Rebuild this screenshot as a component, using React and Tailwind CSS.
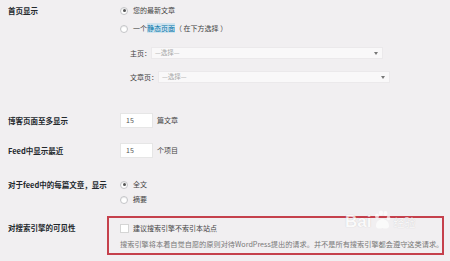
import React from "react";

const font = { fontFamily: '"Noto Sans CJK SC", "Noto Sans", sans-serif' };

function Radio({ checked }) {
  return (
    <span className="w-[8px] h-[8px] rounded-full border border-[#c3c4c7] bg-white flex items-center justify-center shrink-0 shadow-[inset_0_1px_1px_rgba(0,0,0,0.08)]">
      {checked && <span className="w-[3px] h-[3px] rounded-full bg-[#555]" />}
    </span>
  );
}

function Select({ label }) {
  return (
    <div className="flex items-center h-[12px] pl-[10px]">
      <span className="text-[7px] text-[#444] whitespace-nowrap">{label}</span>
      <div className="w-[232px] h-[12px] bg-[#f9f8f9] border border-[#ebe9eb] flex items-center justify-between pl-[3px] pr-[4px]">
        <span className="text-[6.5px] text-[#a8a8a8]">—选择—</span>
        <span className="w-0 h-0 border-l-[2px] border-r-[2px] border-t-[3px] border-l-transparent border-r-transparent border-t-[#777]" />
      </div>
    </div>
  );
}

function Label({ children, h }) {
  return (
    <div className={`w-[120px] pl-[8px] flex items-center shrink-0 text-[7.5px] font-bold text-[#23282d] whitespace-nowrap ${h}`}>
      {children}
    </div>
  );
}

export default function App() {
  return (
    <div className="relative w-[450px] h-[261px] bg-[#f1eff1] overflow-hidden" style={font}>
      <div className="flex flex-col">
        {/* Row 1 */}
        <div className="flex pt-[5px]">
          <Label h="h-[11px]">首页显示</Label>
          <div className="flex flex-col">
            <div className="flex items-center h-[11px] gap-[5px]">
              <Radio checked />
              <span className="text-[7px] text-[#444]">您的最新文章</span>
            </div>
            <div className="flex items-center h-[11px] gap-[5px] mt-[7px]">
              <Radio />
              <span className="text-[7px] text-[#444] whitespace-nowrap">
                一个<span className="text-[#0073aa] bg-[#cfe3ee]">静态页面</span>（ 在下方选择 ）
              </span>
            </div>
            <div className="mt-[13px]">
              <Select label="主页：" />
            </div>
            <div className="mt-[12px]">
              <Select label="文章页：" />
            </div>
          </div>
        </div>

        {/* Row 2 */}
        <div className="flex mt-[30px]">
          <Label h="h-[15px]">博客页面至多显示</Label>
          <div className="flex items-center gap-[4px]">
            <div className="w-[33px] h-[15px] bg-white border border-[#e6e6e6] flex items-center pl-[5px] text-[7px] text-[#555]">15</div>
            <span className="text-[7px] text-[#444]">篇文章</span>
          </div>
        </div>

        {/* Row 3 */}
        <div className="flex mt-[15px]">
          <Label h="h-[15px]">Feed中显示最近</Label>
          <div className="flex items-center gap-[4px]">
            <div className="w-[33px] h-[15px] bg-white border border-[#e6e6e6] flex items-center pl-[5px] text-[7px] text-[#555]">15</div>
            <span className="text-[7px] text-[#444]">个项目</span>
          </div>
        </div>

        {/* Row 4 */}
        <div className="flex mt-[21px]">
          <Label h="h-[11px]">对于feed中的每篇文章，显示</Label>
          <div className="flex flex-col">
            <div className="flex items-center h-[11px] gap-[5px]">
              <Radio checked />
              <span className="text-[7px] text-[#444]">全文</span>
            </div>
            <div className="flex items-center h-[11px] gap-[5px] mt-[4px]">
              <Radio />
              <span className="text-[7px] text-[#444]">摘要</span>
            </div>
          </div>
        </div>

        {/* Row 5 */}
        <div className="flex mt-[18px]">
          <Label h="h-[10px]">对搜索引擎的可见性</Label>
          <div className="flex flex-col">
            <div className="flex items-center h-[10px] gap-[4px]">
              <span className="w-[9px] h-[9px] bg-white border border-[#d5d5d5] shrink-0" />
              <span className="text-[7px] text-[#444] whitespace-nowrap">建议搜索引擎不索引本站点</span>
            </div>
            <div className="mt-[7px] h-[9px] flex items-center text-[7.2px] text-[#777] whitespace-nowrap">
              搜索引擎将本着自觉自愿的原则对待WordPress提出的请求。并不是所有搜索引擎都会遵守这类请求。
            </div>
          </div>
        </div>
      </div>

      {/* red annotation box */}
      <div className="absolute left-[107px] top-[216px] w-[337px] h-[39px] border-2 border-[#c5404c]" />

      {/* watermark */}
      <div className="absolute left-[345px] top-[210px] flex items-end gap-[1px] opacity-70">
        <span className="text-[17px] leading-none text-white font-bold [text-shadow:0_0_1px_rgba(0,0,0,0.25)]" style={{ fontFamily: '"Liberation Sans", sans-serif' }}>Bai</span>
        <svg width="20" height="20" viewBox="0 0 20 20">
          <ellipse cx="5" cy="6" rx="2" ry="2.6" fill="#fff" />
          <ellipse cx="9" cy="3" rx="2" ry="2.4" fill="#fff" />
          <ellipse cx="13.5" cy="3.5" rx="2" ry="2.4" fill="#fff" />
          <ellipse cx="16.5" cy="8" rx="1.8" ry="2.3" fill="#fff" />
          <path d="M4 16 C4 11 8 9 10.5 9 C13 9 17 11 17 16 C17 19 13 19 10.5 18 C8 19 4 19 4 16 Z" fill="#fff" />
        </svg>
        <span className="text-[11px] leading-none text-white mb-[2px] [text-shadow:0_0_1px_rgba(0,0,0,0.25)]">经验</span>
      </div>
    </div>
  );
}
